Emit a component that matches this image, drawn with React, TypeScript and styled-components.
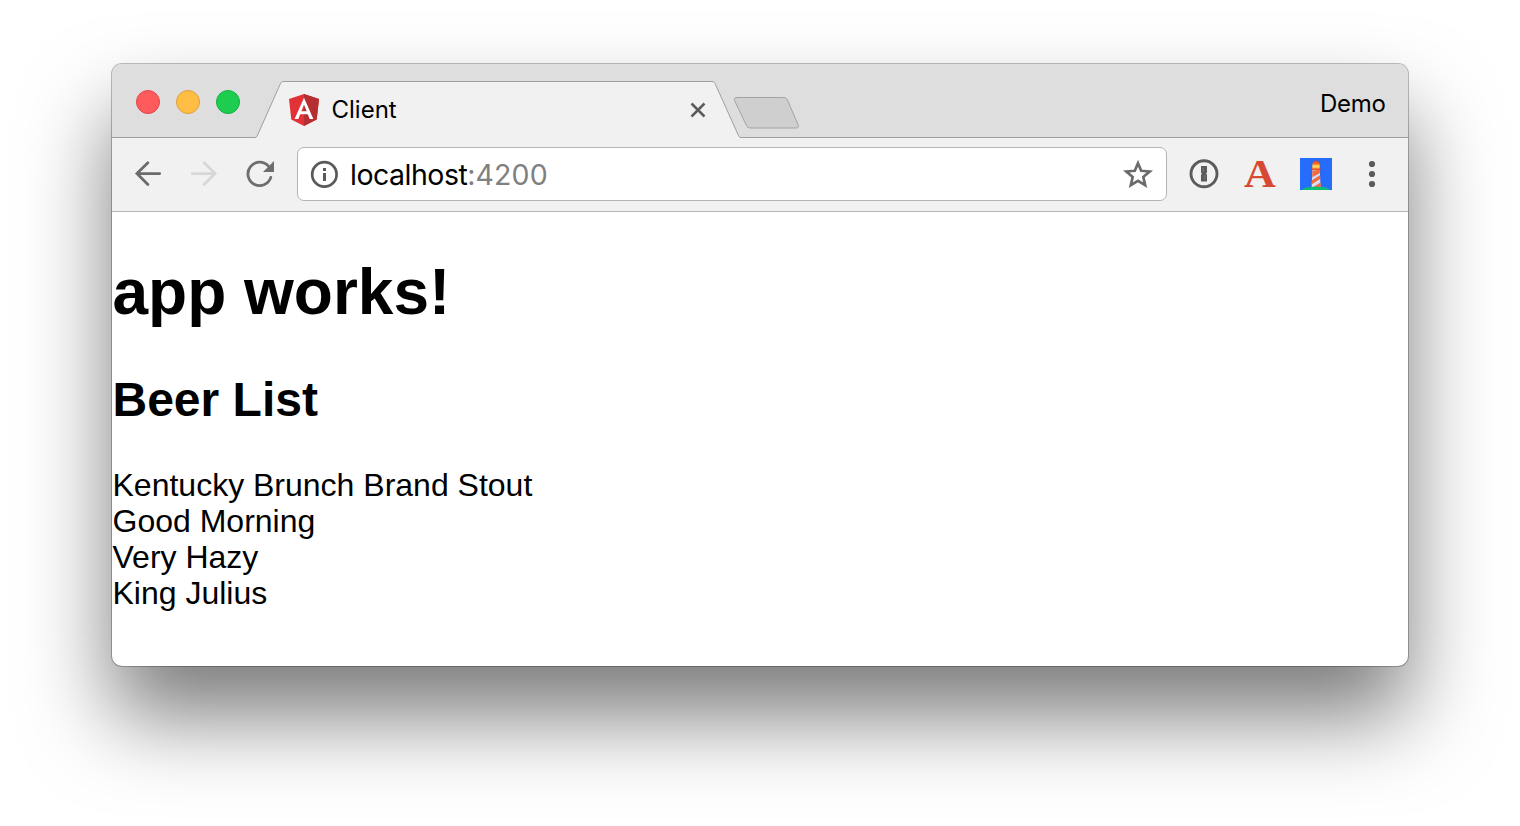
import React from 'react';
import styled, { createGlobalStyle } from 'styled-components';

const GlobalStyle = createGlobalStyle`
  html, body, #root { margin: 0; height: 100%; }
  body { background: #fff; overflow: hidden; color: #000; }
  *, *::before, *::after { box-sizing: border-box; }
  svg { display: block; flex: none; }
`;

const Desktop = styled.main`
  height: 826px;
  padding: 64px 112px 160px;
`;

const BrowserWindow = styled.section`
  display: flex;
  flex-direction: column;
  height: 602px;
  border-radius: 10px;
  background: #fff;
  box-shadow: 0 0 0 1px rgba(0, 0, 0, 0.25), 0 50px 86px rgba(0, 0, 0, 0.52);
`;

const TabStrip = styled.header`
  display: flex;
  align-items: flex-end;
  height: 74px;
  border-radius: 10px 10px 0 0;
  background: #dedede;
  box-shadow: inset 0 -1px 0 #9f9f9f;
  font-family: Inter, sans-serif;
`;

const WindowControls = styled.div`
  display: flex;
  gap: 16px;
  width: 143px;
  padding: 0 0 24px 24px;
`;

const Light = styled.button<{ $fill: string; $edge: string }>`
  flex: none;
  width: 24px;
  height: 24px;
  padding: 0;
  border: 1px solid ${(p) => p.$edge};
  border-radius: 50%;
  background: ${(p) => p.$fill};
`;

const Tab = styled.div`
  position: relative;
  display: flex;
  align-items: center;
  width: 486px;
  height: 57px;
  padding: 0 34px 0 33px;
`;

const TabShape = styled.svg`
  position: absolute;
  inset: 0;
`;

const TabTitle = styled.span`
  position: relative;
  flex: 1;
  margin-left: 11.5px;
  font-size: 24px;
  line-height: 30px;
  letter-spacing: 0;
`;

const TabIcon = styled.span`
  position: relative;
`;

const NewTab = styled.div`
  margin: 0 auto 8px -8px;
`;

const Profile = styled.span`
  padding: 0 22.5px 18px 0;
  font-size: 24px;
  line-height: 32px;
  letter-spacing: -0.3px;
`;

const Toolbar = styled.nav`
  display: flex;
  align-items: center;
  height: 74px;
  padding: 0 20px 2px;
  border-bottom: 1px solid #b4b4b4;
  background: #f1f1f1;
`;

const NavButtons = styled.div`
  display: flex;
  gap: 24px;
  width: 165px;
`;

const AddressBar = styled.div`
  display: flex;
  align-items: center;
  width: 870px;
  height: 54px;
  padding: 0 12px 0 11px;
  border: 1px solid #b4b4b4;
  border-radius: 7px;
  background: #fff;
`;

const Address = styled.span`
  flex: 1;
  margin-left: 11px;
  padding-top: 2px;
  font-family: Inter, sans-serif;
  font-size: 28.5px;
  line-height: 36px;
  letter-spacing: -0.5px;
`;

const Port = styled.span`
  color: #808080;
  letter-spacing: 0.1px;
`;

const Extensions = styled.div`
  display: flex;
  gap: 24px;
  margin-left: 21px;
`;

const Page = styled.article`
  flex: 1;
  padding: 43px 0 0 0.5px;
  border-radius: 0 0 10px 10px;
  font-family: "Liberation Sans", Arial, sans-serif;
`;

const PageTitle = styled.h1`
  margin: 0;
  font-size: 64px;
  line-height: 74px;
`;

const SectionTitle = styled.h2`
  margin: 43px 0 40px;
  font-size: 48px;
  line-height: 55px;
`;

const Beer = styled.div`
  font-size: 32px;
  line-height: 36px;
`;

const beers = ['Kentucky Brunch Brand Stout', 'Good Morning', 'Very Hazy', 'King Julius'];

const AngularLogo = () => (
  <svg width="32" height="32" viewBox="0 0 32 32">
    <path d="M16 0 31 5 28.7 25.5 16 32 3.3 25.5 1 5Z" fill="#e23237" />
    <path d="M16 0 31 5 28.7 25.5 16 32Z" fill="#b52e31" />
    <path fillRule="evenodd" d="M16 3.8 6.6 25h3.7l1.9-4.8h7.6l1.9 4.8h3.7ZM16 10.8l2.7 6.4h-5.4Z" fill="#fff" />
  </svg>
);

const BackIcon = ({ color }: { color: string }) => (
  <svg width="32" height="32" viewBox="0 0 32 32" fill="none" stroke={color} strokeWidth="2.8" strokeLinecap="round">
    <path d="M27.7 15.6H5M15.9 4.7 4.9 15.6 15.9 26.6" />
  </svg>
);

const ForwardIcon = ({ color }: { color: string }) => (
  <svg width="32" height="32" viewBox="0 0 32 32" fill="none" stroke={color} strokeWidth="2.8" strokeLinecap="round">
    <path d="M4.3 15.6H27M16.1 4.7 27.1 15.6 16.1 26.6" />
  </svg>
);

const ReloadIcon = () => (
  <svg width="32" height="32" viewBox="0 0 32 32">
    <path d="M26.8 19.4A11.7 11.7 0 1 1 24.5 8.2" fill="none" stroke="#6e6e6e" strokeWidth="2.8" strokeLinecap="round" />
    <path d="M30 3v11H19Z" fill="#6e6e6e" />
  </svg>
);

const InfoIcon = () => (
  <svg width="30" height="30" viewBox="0 0 30 30">
    <circle cx="15.4" cy="15.4" r="12.2" fill="none" stroke="#5a5a5a" strokeWidth="2.7" />
    <path d="M14 9h3v3h-3zM14 14h3v8h-3z" fill="#5a5a5a" />
  </svg>
);

const StarIcon = () => (
  <svg width="32" height="32" viewBox="0 0 32 32" fill="none" stroke="#6b6b6b" strokeWidth="2.7">
    <path d="m16 5.2 3.2 7.6 8.5.7-6.4 5.5 1.9 8.2-7.2-4.4-7.2 4.4 1.9-8.2-6.4-5.5 8.5-.7Z" />
  </svg>
);

const PasswordIcon = () => (
  <svg width="32" height="32" viewBox="0 0 32 32">
    <circle cx="16" cy="15.8" r="13" fill="none" stroke="#5b5b5b" strokeWidth="2.9" />
    <path d="M13 8h6v6.3l-.9 1.2.9 1.2v6.8h-6v-6.5l.9-1.2-.9-1.2Z" fill="#5b5b5b" />
    <path d="M15.2 10v4.3M16.8 17v4.3" stroke="#888" strokeWidth=".7" />
  </svg>
);

const LetterIcon = styled.span`
  width: 32px;
  height: 32px;
  color: #d64a33;
  font: bold 40px/32px "Liberation Serif", serif;
  text-align: center;
  transform: scaleX(1.1);
`;

const LighthouseIcon = () => (
  <svg width="32" height="32" viewBox="0 0 32 32">
    <defs>
      <linearGradient id="lamp" x2="0" y2="1">
        <stop offset="0" stopColor="#e8402c" />
        <stop offset=".35" stopColor="#f56a2c" />
        <stop offset=".65" stopColor="#ffe05a" />
        <stop offset="1" stopColor="#ff9b37" />
      </linearGradient>
    </defs>
    <path d="M0 0h32v32H0z" fill="#256dfa" />
    <path d="M11 8c0-8 10-8 10 0l1 22H10Z" fill="#3b62d8" opacity=".65" />
    <path d="M12.4 12h7.4l.8 18h-9Z" fill="#d5def5" />
    <path d="m12.4 13 7.4-1.2.2 3.2-7.8 4.2ZM12 22.2l8-5 .2 3.8-8.4 5.2ZM11.8 30l8.6-5.5.3 5.5Z" fill="#f5693b" />
    <path d="M12.3 11V7c0-5.6 7.4-5.6 7.4 0v4Z" fill="url(#lamp)" />
    <path d="M11.6 10.5h8.8v1.7h-8.8z" fill="#ee5130" />
    <path d="M2 32c2-4.3 26-4.3 28 0Z" fill="#08bf73" />
  </svg>
);

const MenuIcon = () => (
  <svg width="32" height="32" viewBox="0 0 32 32" fill="#5b5b5b">
    <circle cx="16" cy="6" r="3.1" />
    <circle cx="16" cy="16" r="3.1" />
    <circle cx="16" cy="26" r="3.1" />
  </svg>
);

export default function App() {
  return (
    <>
      <GlobalStyle />
      <Desktop>
        <BrowserWindow>
          <TabStrip>
            <WindowControls>
              <Light aria-label="Close" $fill="#ff5b5c" $edge="#e2444b" />
              <Light aria-label="Minimize" $fill="#ffbd44" $edge="#df9e3b" />
              <Light aria-label="Zoom" $fill="#1dcd50" $edge="#14ad3f" />
            </WindowControls>
            <Tab>
              <TabShape width="486" height="57" viewBox="0 0 486 57">
                <path d="M0 57C1.4 56.5 1.8 55.5 2.6 54L25 3.5C26 1.3 26.8.5 29 .5H457c2 0 2.5 1 3.5 3L483 53.5c1 2 1.5 3 3 3.5Z" fill="#f1f1f1" />
                <path d="M0 56.5C1.4 56.3 1.8 55.5 2.6 54L25 3.5C26 1.3 26.8.5 29 .5H457c2 0 2.5 1 3.5 3L483 53.5c1 2 1.5 3 3 3" fill="none" stroke="#9f9f9f" />
              </TabShape>
              <TabIcon><AngularLogo /></TabIcon>
              <TabTitle>Client</TabTitle>
              <TabIcon>
                <svg width="18" height="18" viewBox="0 0 18 18" stroke="#5c5c5c" strokeWidth="2.5">
                  <path d="m2.5 2.5 13 13m0-13-13 13" />
                </svg>
              </TabIcon>
            </Tab>
            <NewTab>
              <svg width="68" height="34" viewBox="0 0 68 34">
                <path d="M4 1.5H50.5c2 0 3 .7 4 2.6L65 28.6c.9 2.1.3 3.4-2 3.4H18c-2.8 0-3.8-1-4.8-3L1.6 4.6C.7 2.6 1.4 1.5 4 1.5Z" fill="#cfcfcf" stroke="#a3a3a3" />
              </svg>
            </NewTab>
            <Profile>Demo</Profile>
          </TabStrip>
          <Toolbar>
            <NavButtons>
              <BackIcon color="#6b6b6b" />
              <ForwardIcon color="#d7d7d7" />
              <ReloadIcon />
            </NavButtons>
            <AddressBar>
              <InfoIcon />
              <Address>localhost<Port>:4200</Port></Address>
              <StarIcon />
            </AddressBar>
            <Extensions>
              <PasswordIcon />
              <LetterIcon>A</LetterIcon>
              <LighthouseIcon />
              <MenuIcon />
            </Extensions>
          </Toolbar>
          <Page>
            <PageTitle>app works!</PageTitle>
            <SectionTitle>Beer List</SectionTitle>
            {beers.map((beer) => <Beer key={beer}>{beer}</Beer>)}
          </Page>
        </BrowserWindow>
      </Desktop>
    </>
  );
}
